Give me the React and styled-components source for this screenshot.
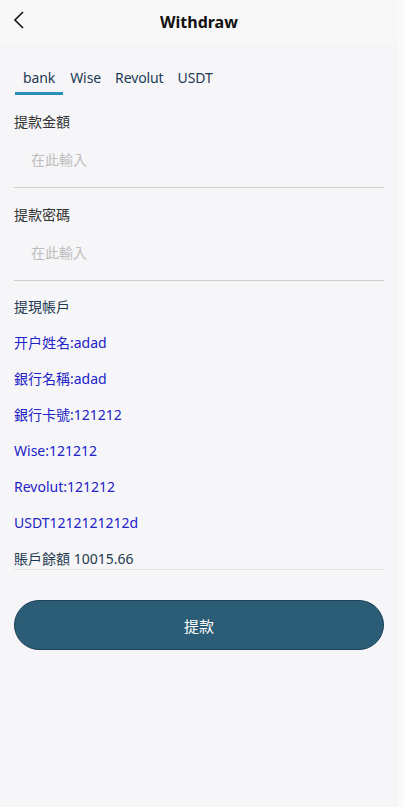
import React, { useState } from 'react'
import styled, { createGlobalStyle } from 'styled-components'

const GlobalStyle = createGlobalStyle`
  html, body {
    margin: 0;
    padding: 0;
    background: #fafafa;
  }
  body {
    font-family: "Noto Sans", "Noto Sans CJK TC", sans-serif;
    -webkit-font-smoothing: antialiased;
  }
  * {
    box-sizing: border-box;
  }
`

const Page = styled.div`
  background: #f6f6f8;
  min-height: 807px;
  width: 398px;
`

const Header = styled.header`
  align-items: center;
  background: #f8f8f8;
  display: flex;
  height: 44px;
  justify-content: center;
  position: relative;
`

const BackButton = styled.button`
  background: none;
  border: 0;
  cursor: pointer;
  display: flex;
  left: 8px;
  padding: 4px;
  position: absolute;
  top: 6px;
`

const Title = styled.h1`
  color: #111;
  font-size: 16px;
  font-weight: 700;
  margin: 0;
`

const Content = styled.div`
  padding: 12px 14px 0 14px;
`

const Tabs = styled.div`
  display: flex;
  padding-left: 1px;
`

const Tab = styled.button`
  background: none;
  border: 0;
  border-bottom: 3px solid ${p => (p.$active ? '#2a8fbd' : 'transparent')};
  color: #1e3a56;
  cursor: pointer;
  font-family: inherit;
  font-size: 14px;
  height: 39px;
  letter-spacing: -0.1px;
  line-height: 20px;
  padding: 8px 7px 0;

  &:first-child {
    padding: 8px 8px 0;
  }
`

const Field = styled.div`
  border-bottom: 1px solid #cfcfcf;
  padding-top: 17px;
`

const Label = styled.div`
  color: #333;
  font-size: 14px;
  line-height: 20px;
`

const Input = styled.input`
  background: transparent;
  border: 0;
  color: #333;
  display: block;
  font-family: inherit;
  font-size: 14px;
  height: 55px;
  outline: none;
  padding: 0 0 0 17px;
  width: 100%;

  &::placeholder {
    color: #bdbdbd;
  }
`

const Accounts = styled.div`
  padding-top: 8px;
`

const Row = styled.div`
  color: ${p => (p.$info ? '#2222c8' : '#1e3a50')};
  font-size: 14px;
  line-height: 36px;
`

const Balance = styled.div`
  border-bottom: 1px solid #e4e4e4;
  color: #1e3a50;
  font-size: 14px;
  line-height: 20px;
  padding-top: 8px;
`

const SubmitButton = styled.button`
  background: #2b5d76;
  border: 1px solid #1f425c;
  border-radius: 25px;
  color: #fff;
  cursor: pointer;
  display: block;
  font-family: inherit;
  font-size: 15px;
  height: 50px;
  margin-top: 30px;
  width: 100%;
`

const tabs = ['bank', 'Wise', 'Revolut', 'USDT']

const accountRows = [
  '开户姓名:adad',
  '銀行名稱:adad',
  '銀行卡號:121212',
  'Wise:121212',
  'Revolut:121212',
  'USDT1212121212d',
]

const App = () => {
  const [active, setActive] = useState('bank')
  return (
    <>
      <GlobalStyle />
      <Page>
        <Header>
          <BackButton aria-label="Back">
            <svg width="14" height="20" viewBox="0 0 14 20" fill="none">
              <path d="M11 2L3 10l8 8" stroke="#111" strokeWidth="1.6" />
            </svg>
          </BackButton>
          <Title>Withdraw</Title>
        </Header>
        <Content>
          <Tabs>
            {tabs.map(t => (
              <Tab key={t} $active={active === t} onClick={() => setActive(t)}>
                {t}
              </Tab>
            ))}
          </Tabs>
          <Field>
            <Label>提款金額</Label>
            <Input placeholder="在此輸入" />
          </Field>
          <Field>
            <Label>提款密碼</Label>
            <Input type="password" placeholder="在此輸入" />
          </Field>
          <Accounts>
            <Row>提現帳戶</Row>
            {accountRows.map(r => (
              <Row key={r} $info>
                {r}
              </Row>
            ))}
            <Balance>賬戶餘額 10015.66</Balance>
          </Accounts>
          <SubmitButton>提款</SubmitButton>
        </Content>
      </Page>
    </>
  )
}

export default App
